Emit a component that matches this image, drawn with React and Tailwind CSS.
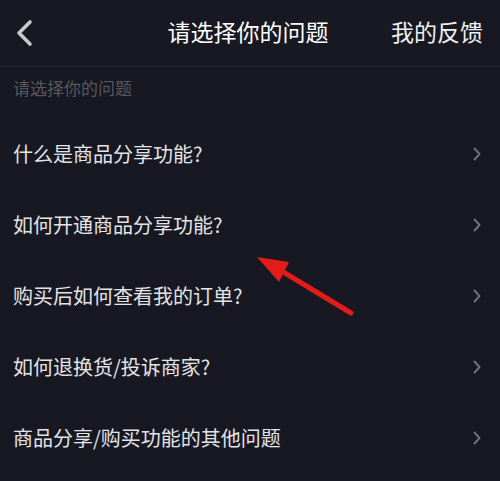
const questions = [
  "什么是商品分享功能?",
  "如何开通商品分享功能?",
  "购买后如何查看我的订单?",
  "如何退换货/投诉商家?",
  "商品分享/购买功能的其他问题",
];

function Chevron() {
  return (
    <svg width="10" height="14" viewBox="0 0 10 14" fill="none">
      <path
        d="M2.5 1.5 L7.5 7 L2.5 12.5"
        stroke="#6f7078"
        strokeWidth="2"
        strokeLinecap="round"
        strokeLinejoin="round"
      />
    </svg>
  );
}

export default function App() {
  return (
    <div
      className="relative h-[481px] w-[500px] overflow-hidden bg-[#171821] text-[#e8e8ea]"
      style={{ fontFamily: '"Noto Sans CJK SC", "Noto Sans", sans-serif' }}
    >
      {/* Header */}
      <header className="flex h-[67px] items-center border-b border-[#25262e] pb-[3px]">
        <div className="flex w-[106px] items-center pl-[14px] pt-[2px]">
          <svg width="22" height="28" viewBox="0 0 22 28" fill="none">
            <path
              d="M16 3 L5 14 L16 25"
              stroke="#c9cacd"
              strokeWidth="3.6"
              strokeLinecap="round"
              strokeLinejoin="round"
            />
          </svg>
        </div>
        <h1 className="flex-1 text-center text-[23px] leading-none text-white">
          请选择你的问题
        </h1>
        <div className="w-[110px] pr-[17px] text-right text-[23px] leading-none text-[#f0f0f2]">
          我的反馈
        </div>
      </header>

      {/* Section label */}
      <div className="flex h-[51px] items-start pl-[13px] pt-[11px] text-[17px] leading-5 text-[#56575f]">
        请选择你的问题
      </div>

      {/* Question list */}
      <ul>
        {questions.map((q) => (
          <li key={q} className="flex h-[71px] items-center justify-between pl-[13px] pr-[18px]">
            <span className="text-[20px] leading-none text-[#e4e4e7]">{q}</span>
            <Chevron />
          </li>
        ))}
      </ul>

      {/* Red annotation arrow */}
      <svg
        className="pointer-events-none absolute left-0 top-0"
        width="500"
        height="481"
        viewBox="0 0 500 481"
      >
        <line
          x1="351"
          y1="313"
          x2="280"
          y2="270"
          stroke="#e21b1b"
          strokeWidth="5"
          strokeLinecap="round"
        />
        <polygon points="257,257 289,262 279,282" fill="#e21b1b" />
      </svg>
    </div>
  );
}
